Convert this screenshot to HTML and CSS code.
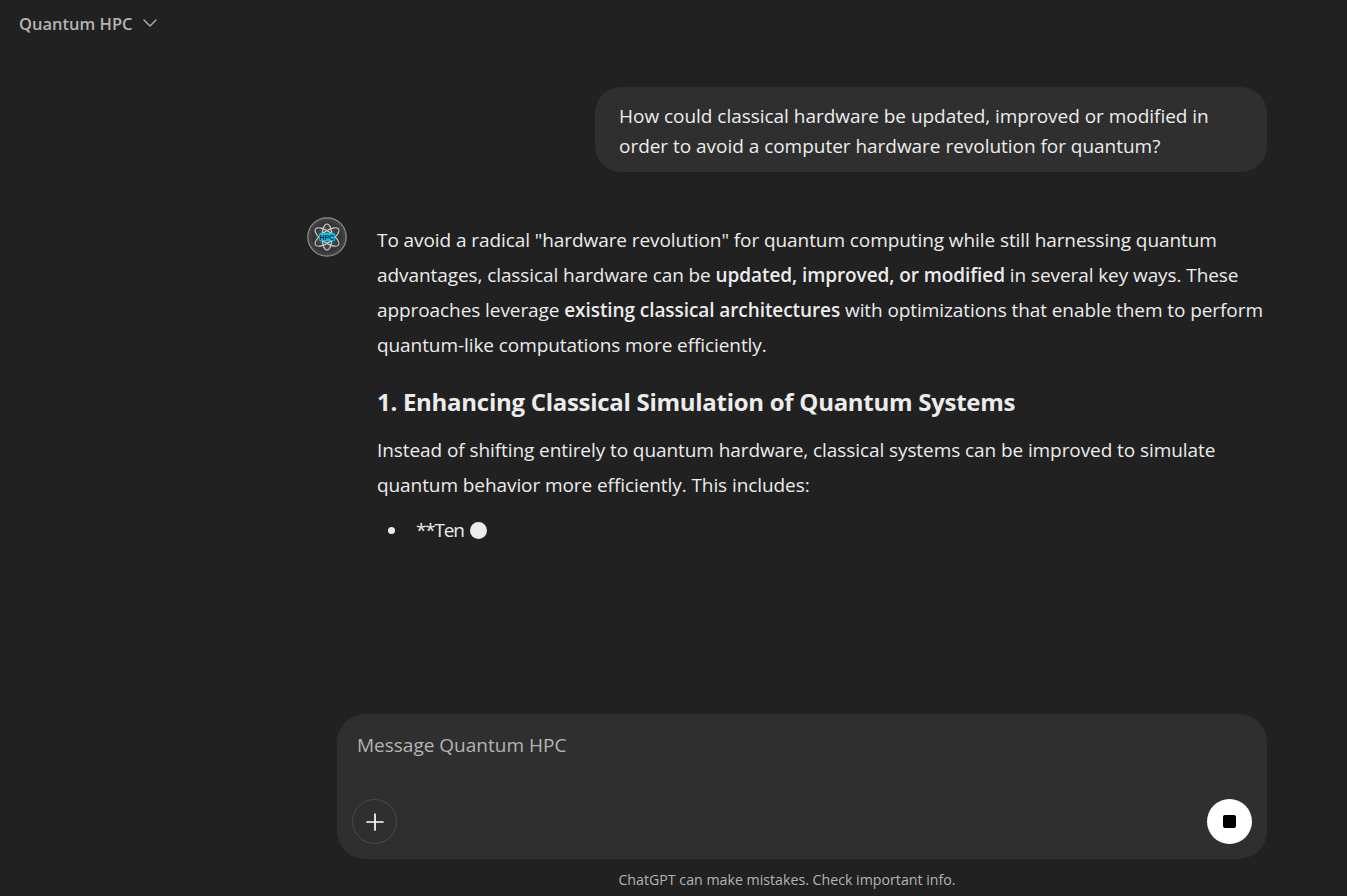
FILE: index.html
```html
<!DOCTYPE html>
<html lang="en">
<head>
<meta charset="UTF-8" />
<meta name="viewport" content="width=device-width, initial-scale=1" />
<title>Quantum HPC</title>
<link rel="stylesheet" href="styles.css">
</head>
<body>
<header class="topbar">
  <span class="model-name">Quantum HPC</span>
  <svg class="chevron" width="16" height="16" viewBox="0 0 16 16" fill="none" aria-hidden="true">
    <path d="M2 5 8 11l6-6" stroke="#a8a8a8" stroke-width="1.5" stroke-linecap="round" stroke-linejoin="round"/>
  </svg>
</header>
<main class="thread">
  <div class="user-row">
    <div class="user-bubble">How could classical hardware be updated, improved or modified in order to avoid a computer hardware revolution for quantum?</div>
  </div>
  <div class="reply-row">
    <div class="avatar">
      <svg width="40" height="40" viewBox="0 0 40 40" aria-hidden="true">
        <defs>
          <radialGradient id="globe" cx="50%" cy="50%" r="50%">
            <stop offset="0%" stop-color="#6a6a6a"/>
            <stop offset="70%" stop-color="#333"/>
            <stop offset="100%" stop-color="#484848"/>
          </radialGradient>
        </defs>
        <circle cx="20" cy="20" r="19.2" fill="url(#globe)" stroke="#8c8c8c" stroke-width="1.2"/>
        <g fill="none" stroke="#d0d0d0" stroke-width="1.1">
          <ellipse cx="20" cy="20" rx="14" ry="5.5" transform="rotate(35 20 20)"/>
          <ellipse cx="20" cy="20" rx="14" ry="5.5" transform="rotate(-35 20 20)"/>
          <ellipse cx="20" cy="20" rx="5" ry="13"/>
        </g>
        <rect x="12" y="16" width="16" height="8" rx="1.5" fill="#06c3ee"/>
        <text x="20" y="22.6" class="avatar-label" text-anchor="middle">HPC</text>
      </svg>
    </div>
    <div class="reply">
      <p>To avoid a radical "hardware revolution" for quantum computing while still harnessing quantum advantages, classical hardware can be <strong>updated, improved, or modified</strong> in several key ways. These approaches leverage <strong>existing classical architectures</strong> with optimizations that enable them to perform quantum-like computations more efficiently.</p>
      <h3>1. Enhancing Classical Simulation of Quantum Systems</h3>
      <p>Instead of shifting entirely to quantum hardware, classical systems can be improved to simulate quantum behavior more efficiently. This includes:</p>
      <ul>
        <li><span class="stream-text">**Ten</span><span class="cursor"></span></li>
      </ul>
    </div>
  </div>
</main>
<form class="composer">
  <div class="placeholder">Message Quantum HPC</div>
  <div class="composer-actions">
    <button type="button" class="btn-add" aria-label="Attach">
      <svg width="20" height="20" viewBox="0 0 20 20" fill="none" aria-hidden="true">
        <path d="M10 2v16M2 10h16" stroke="#fff" stroke-width="1.7" stroke-linecap="round"/>
      </svg>
    </button>
    <button type="button" class="btn-stop" aria-label="Stop"><span class="stop-square"></span></button>
  </div>
</form>
<footer class="disclaimer">ChatGPT can make mistakes. Check important info.</footer>
</body>
</html>
```

FILE: styles.css
```css
* {
  box-sizing: border-box;
}
body {
  margin: 0;
  height: 896px;
  overflow: hidden;
  background: #212121;
  color: #ececec;
  font-family: "Open Sans", "Noto Sans", sans-serif;
  display: flex;
  flex-direction: column;
}
.topbar {
  height: 46px;
  padding-left: 19px;
  display: flex;
  align-items: center;
  gap: 9px;
  flex-shrink: 0;
}
.model-name {
  font-size: 16.5px;
  font-weight: 600;
  color: #b4b4b4;
}
.thread {
  flex: 1;
  padding: 41px 80px 0 307px;
}
.user-row {
  display: flex;
  justify-content: flex-end;
}
.user-bubble {
  width: 672px;
  padding: 14px 24px 11px;
  background: #2f2f2f;
  border-radius: 26px;
  font-size: 19px;
  line-height: 30px;
  letter-spacing: -0.03px;
  color: #ececec;
}
.reply-row {
  display: flex;
  gap: 30px;
  margin-top: 45px;
}
.avatar {
  width: 40px;
  height: 40px;
  flex-shrink: 0;
}
.avatar-label {
  font-family: "Liberation Sans", sans-serif;
  font-size: 7px;
  font-weight: 700;
  fill: #123;
}
.reply {
  flex: 1;
  font-size: 19px;
  line-height: 35px;
  letter-spacing: -0.08px;
  color: #ececec;
}
.reply p {
  margin: 6px 0 0;
}
.reply strong {
  font-weight: 600;
}
.reply h3 {
  margin: 21px 0 0;
  font-size: 24px;
  line-height: 35px;
  font-weight: 700;
  letter-spacing: -0.28px;
}
.reply h3 + p {
  margin-top: 14px;
}
.reply ul {
  margin: 10px 0 0;
  padding-left: 11px;
  list-style: none;
}
.reply li {
  display: flex;
  align-items: center;
}
.reply li::before {
  content: "";
  width: 7px;
  height: 7px;
  margin-right: 21px;
  border-radius: 50%;
  background: #ececec;
}
.stream-text {
  letter-spacing: -1.2px;
}
.cursor {
  width: 17px;
  height: 17px;
  margin-left: 6px;
  border-radius: 50%;
  background: #ececec;
}
.composer {
  width: 930px;
  height: 145px;
  margin-left: 337px;
  padding: 18px 15px 15px;
  background: #2f2f2f;
  border-radius: 28px;
  display: flex;
  flex-direction: column;
  justify-content: space-between;
  flex-shrink: 0;
}
.placeholder {
  padding-left: 5px;
  font-size: 19px;
  line-height: 26px;
  color: #b4b4b4;
}
.composer-actions {
  display: flex;
  justify-content: space-between;
}
.composer-actions button {
  width: 45px;
  height: 45px;
  border-radius: 50%;
  padding: 0;
  display: flex;
  align-items: center;
  justify-content: center;
  cursor: pointer;
}
.btn-add {
  background: transparent;
  border: 1px solid #4a4a4a;
}
.btn-stop {
  background: #fff;
  border: none;
}
.stop-square {
  width: 13px;
  height: 13px;
  background: #000;
  border-radius: 2px;
}
.disclaimer {
  height: 37px;
  padding: 4px 0 0 307px;
  width: 1267px;
  display: flex;
  align-items: center;
  justify-content: center;
  font-size: 14.2px;
  color: #b4b4b4;
  flex-shrink: 0;
}
```
